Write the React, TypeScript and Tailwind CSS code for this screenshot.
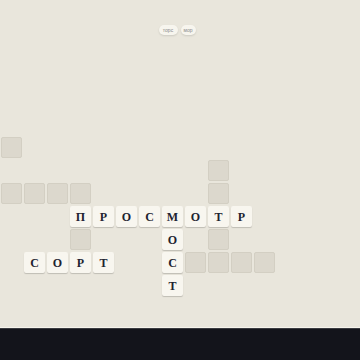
import React from "react";

const rows: string[] = [
  "#...........",
  ".........#..",
  "####.....#..",
  "...ПРОСМОТР.",
  "...#...О.#..",
  ".СОРТ..С####",
  ".......Т....",
];

export default function App() {
  return (
    <div
      className="w-[360px] h-[360px] bg-[#e9e6dc] flex flex-col overflow-hidden"
      style={{ fontFamily: '"Liberation Serif", "DejaVu Serif", serif' }}
    >
      <div className="flex justify-center items-start gap-[3px] pt-[25px] pr-[6px] h-[137px]">
        <div className="w-[19px] h-[10px] rounded-full bg-[#f7f5ee] shadow-[0_1px_2px_rgba(0,0,0,0.12)] text-[5px] leading-[10px] text-center text-[#888] font-['Liberation_Sans',sans-serif] overflow-hidden whitespace-nowrap">
          торс
        </div>
        <div className="w-[15px] h-[10px] rounded-full bg-[#f7f5ee] shadow-[0_1px_2px_rgba(0,0,0,0.12)] text-[5px] leading-[10px] text-center text-[#888] font-['Liberation_Sans',sans-serif] overflow-hidden whitespace-nowrap">
          мор
        </div>
      </div>
      <div className="pl-[1px] h-[190px]">
        <div className="grid grid-cols-[repeat(12,21px)] grid-rows-[repeat(7,21px)] gap-[2px]">
          {rows.flatMap((row, r) =>
            Array.from(row).map((ch, c) => {
              if (ch === ".") return <div key={`${r}-${c}`} />;
              if (ch === "#")
                return (
                  <div
                    key={`${r}-${c}`}
                    className="rounded-[2px] bg-[#dcd8cd] border border-[#d3cfc3]"
                  />
                );
              return (
                <div
                  key={`${r}-${c}`}
                  className="rounded-[2px] bg-[#f8f6ef] shadow-[0_1px_1px_rgba(0,0,0,0.18)] flex items-center justify-center text-[12px] font-bold text-[#1e2330]"
                >
                  {ch}
                </div>
              );
            })
          )}
        </div>
      </div>
      <div className="h-[1px] bg-[#f6f4ec]" />
      <div className="flex-1 bg-[#13141b] border-t border-[#3a3b40]" />
    </div>
  );
}
